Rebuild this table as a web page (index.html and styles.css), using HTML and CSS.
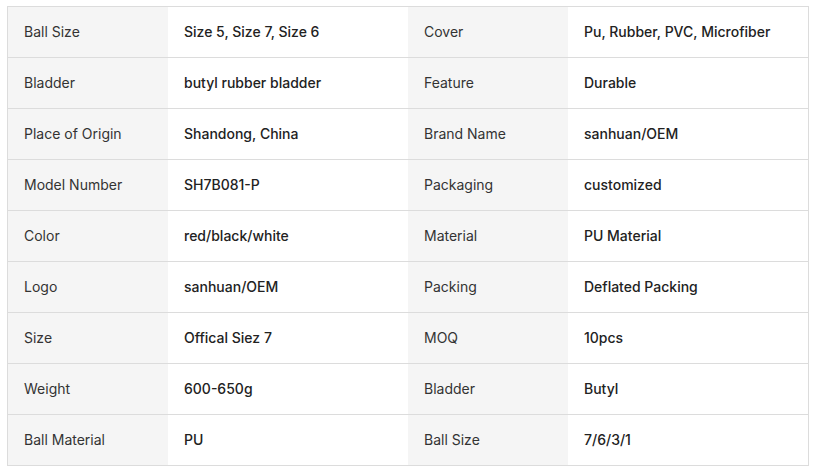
FILE: index.html
```html
<!DOCTYPE html>
<html lang="en">
<head>
<meta charset="utf-8">
<title>Specs</title>
<link rel="stylesheet" href="styles.css">
</head>
<body>
<div class="specs">
  <div class="k">Ball Size</div><div class="v">Size 5, Size 7, Size 6</div><div class="k">Cover</div><div class="v">Pu, Rubber, PVC, Microfiber</div>
  <div class="k">Bladder</div><div class="v">butyl rubber bladder</div><div class="k">Feature</div><div class="v">Durable</div>
  <div class="k">Place of Origin</div><div class="v">Shandong, China</div><div class="k">Brand Name</div><div class="v">sanhuan/OEM</div>
  <div class="k">Model Number</div><div class="v">SH7B081-P</div><div class="k">Packaging</div><div class="v">customized</div>
  <div class="k">Color</div><div class="v">red/black/white</div><div class="k">Material</div><div class="v">PU Material</div>
  <div class="k">Logo</div><div class="v">sanhuan/OEM</div><div class="k">Packing</div><div class="v">Deflated Packing</div>
  <div class="k">Size</div><div class="v">Offical Siez 7</div><div class="k">MOQ</div><div class="v">10pcs</div>
  <div class="k">Weight</div><div class="v">600-650g</div><div class="k">Bladder</div><div class="v">Butyl</div>
  <div class="k">Ball Material</div><div class="v">PU</div><div class="k">Ball Size</div><div class="v">7/6/3/1</div>
</div>
</body>
</html>
```
FILE: styles.css
```css
html, body {
  margin: 0;
  background: #fff;
}
body {
  padding: 6px 0 0 7px;
  font-family: Inter, "Liberation Sans", sans-serif;
  font-size: 14px;
}
.specs {
  display: grid;
  grid-template-columns: 160px 240px 160px 240px;
  width: 800px;
  border: 1px solid #dcdcdc;
  border-bottom: none;
}
.k, .v {
  box-sizing: border-box;
  height: 51px;
  border-bottom: 1px solid #dcdcdc;
  display: flex;
  align-items: center;
  padding: 0 0 2px 16px;
  white-space: nowrap;
}
.k {
  background: #f5f5f5;
  color: #333;
  font-weight: 400;
}
.v {
  background: #fff;
  color: #222;
  font-weight: 500;
}
```
